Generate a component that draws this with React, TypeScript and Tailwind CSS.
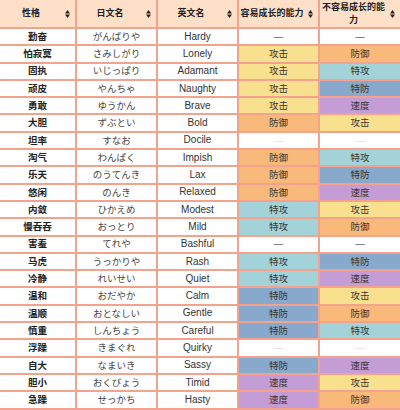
import React from 'react'

type Stat = '攻击' | '防御' | '特攻' | '特防' | '速度' | '-' | '~'

const statBg: Record<string, string> = {
  攻击: 'bg-[#f9e08f]',
  防御: 'bg-[#f8b97a]',
  特攻: 'bg-[#a3d3d8]',
  特防: 'bg-[#88a9cb]',
  速度: 'bg-[#c49cd6]',
  '-': 'bg-white',
  '~': 'bg-white',
}

const rows: [string, string, string, Stat, Stat][] = [
  ['勤奋', 'がんばりや', 'Hardy', '-', '-'],
  ['怕寂寞', 'さみしがり', 'Lonely', '攻击', '防御'],
  ['固执', 'いじっぱり', 'Adamant', '攻击', '特攻'],
  ['顽皮', 'やんちゃ', 'Naughty', '攻击', '特防'],
  ['勇敢', 'ゆうかん', 'Brave', '攻击', '速度'],
  ['大胆', 'ずぶとい', 'Bold', '防御', '攻击'],
  ['坦率', 'すなお', 'Docile', '~', '~'],
  ['淘气', 'わんぱく', 'Impish', '防御', '特攻'],
  ['乐天', 'のうてんき', 'Lax', '防御', '特防'],
  ['悠闲', 'のんき', 'Relaxed', '防御', '速度'],
  ['内敛', 'ひかえめ', 'Modest', '特攻', '攻击'],
  ['慢吞吞', 'おっとり', 'Mild', '特攻', '防御'],
  ['害羞', 'てれや', 'Bashful', '-', '-'],
  ['马虎', 'うっかりや', 'Rash', '特攻', '特防'],
  ['冷静', 'れいせい', 'Quiet', '特攻', '速度'],
  ['温和', 'おだやか', 'Calm', '特防', '攻击'],
  ['温顺', 'おとなしい', 'Gentle', '特防', '防御'],
  ['慎重', 'しんちょう', 'Careful', '特防', '特攻'],
  ['浮躁', 'きまぐれ', 'Quirky', '~', '~'],
  ['自大', 'なまいき', 'Sassy', '特防', '速度'],
  ['胆小', 'おくびょう', 'Timid', '速度', '攻击'],
  ['急躁', 'せっかち', 'Hasty', '速度', '防御'],
]

function SortIcon() {
  return (
    <svg width="5" height="8" viewBox="0 0 5 8" className="absolute right-[5px] top-1/2 -translate-y-1/2">
      <polygon points="2.5,0 5,3.5 0,3.5" fill="#222" />
      <polygon points="0,4.5 5,4.5 2.5,8" fill="#222" />
    </svg>
  )
}

const widths = ['w-[77px]', 'w-[81px]', 'w-[81px]', 'w-[81px]', 'w-[80px]']

function StatCell({ v, last }: { v: Stat; last?: boolean }) {
  const text = v === '-' || v === '~' ? '—' : v
  const color = v === '~' ? 'text-[#d0d0d0]' : v === '-' ? 'text-[#222]' : 'text-[#3a3530]'
  return (
    <div
      className={`${last ? widths[4] : widths[3] + ' border-r-2'} ${statBg[v]} ${color} flex items-center justify-center border-[#f3a28e]`}
    >
      {text}
    </div>
  )
}

export default function App() {
  const headers = ['性格', '日文名', '英文名', '容易成长的能力', '不容易成长的能力']
  return (
    <div
      className="w-[400px] overflow-hidden bg-white text-[9.5px] leading-none text-[#333]"
      style={{ fontFamily: '"Liberation Sans", "Noto Sans CJK SC", "Noto Sans CJK JP", sans-serif' }}
    >
      <div className="flex h-[29px] border-b-2 border-[#f3a28e] bg-[#fde0c7] text-[9px] font-bold text-[#222]">
        {headers.map((h, i) => (
          <div
            key={h}
            className={`${widths[i]} ${i < 4 ? 'border-r-2' : ''} relative flex items-center justify-center border-[#f3a28e] pr-[13px] text-center leading-[13px]`}
          >
            <span>{h}</span>
            <SortIcon />
          </div>
        ))}
      </div>
      {rows.map(([cn, jp, en, up, down]) => (
        <div key={en} className="flex h-[17.3px] border-b-2 border-[#f3a28e]">
          <div className="w-[77px] border-r-2 border-[#f3a28e] flex items-center justify-center font-bold text-[#222]">
            {cn}
          </div>
          <div className="w-[81px] border-r-2 border-[#f3a28e] flex items-center justify-center text-[#444]">
            {jp}
          </div>
          <div className="w-[81px] border-r-2 border-[#f3a28e] flex items-center justify-center text-[10px] text-[#333]">
            {en}
          </div>
          <StatCell v={up} />
          <StatCell v={down} last />
        </div>
      ))}
    </div>
  )
}
